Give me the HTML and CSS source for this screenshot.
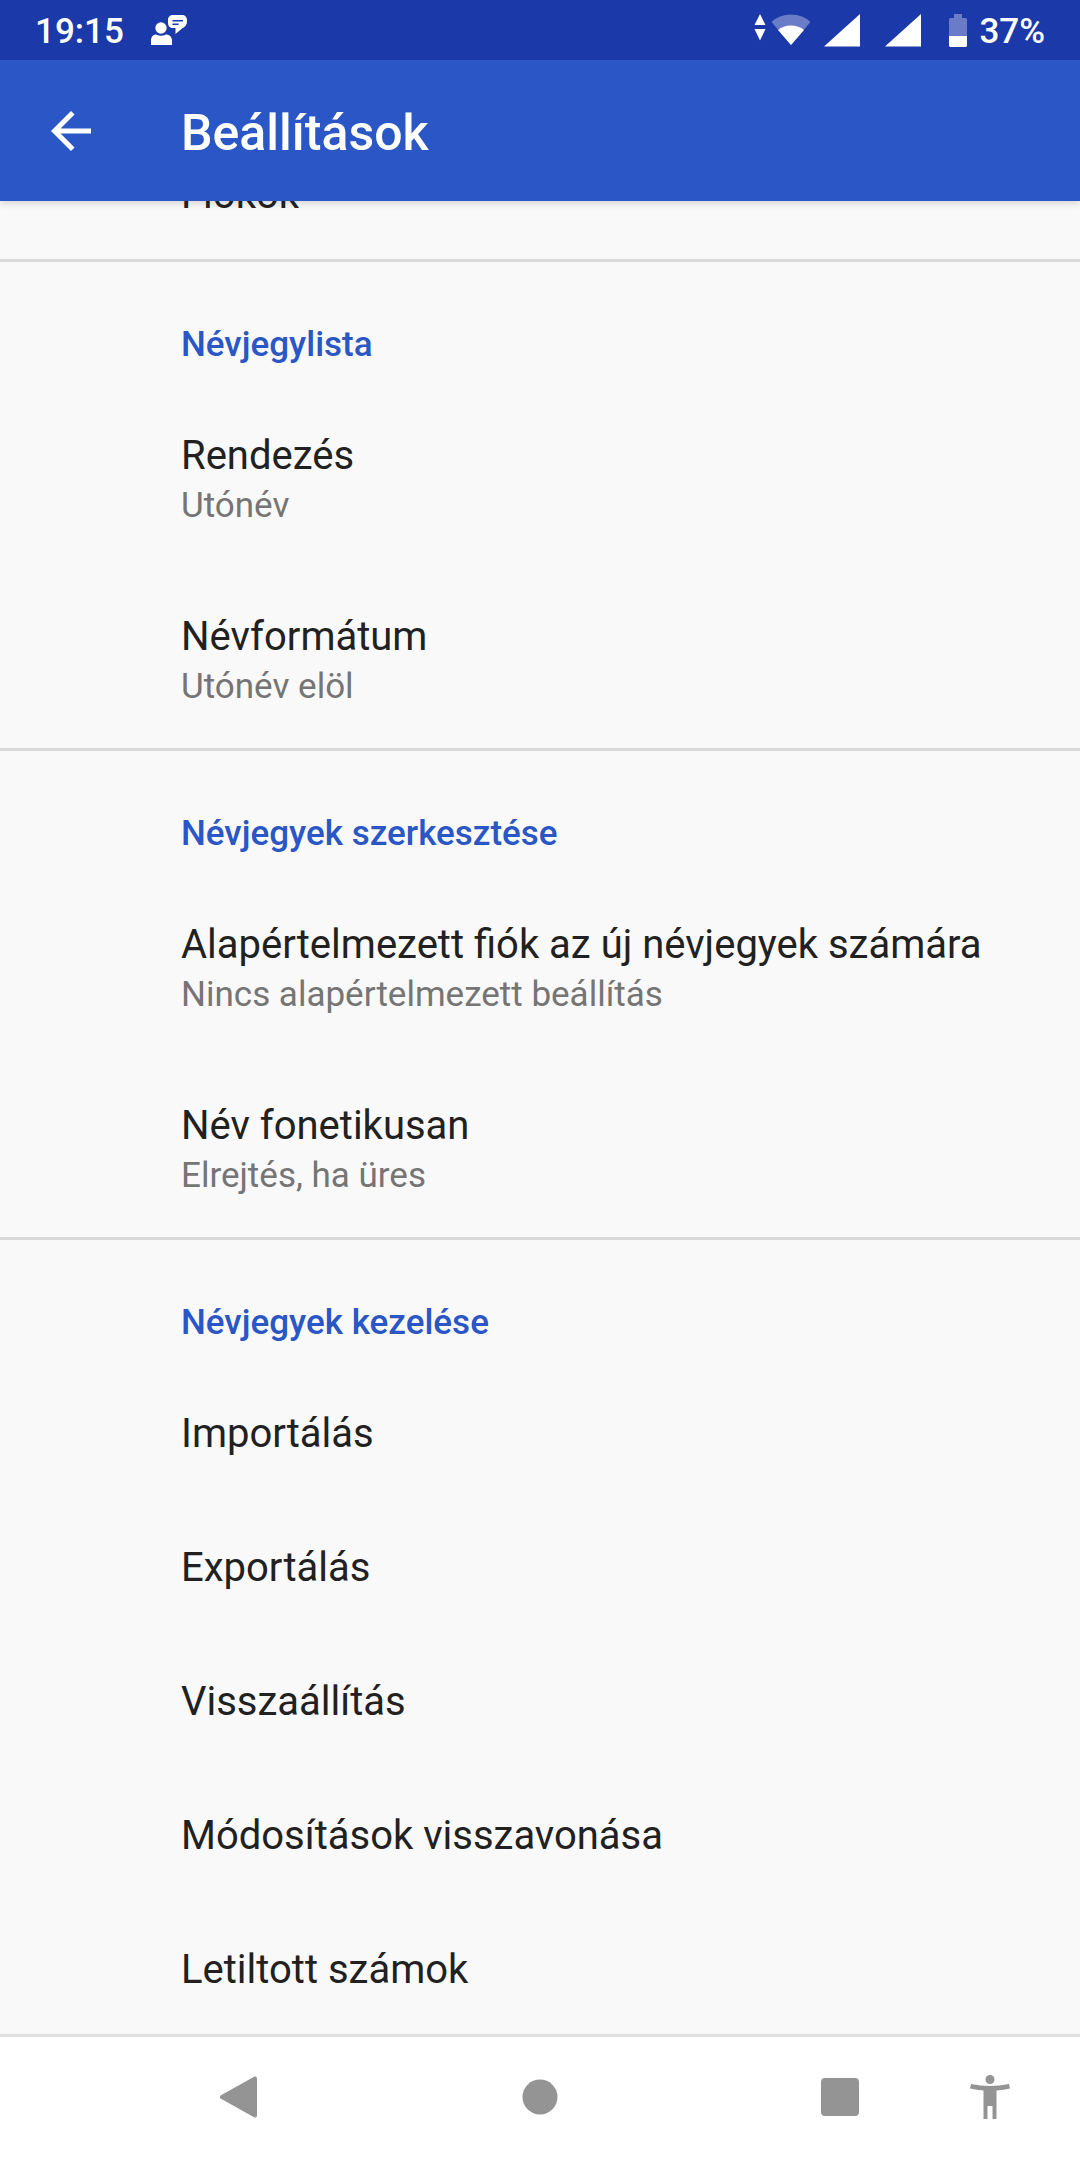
FILE: index.html
```html
<!DOCTYPE html>
<html lang="hu">
<head>
<meta charset="utf-8">
<meta name="viewport" content="width=device-width, initial-scale=1">
<title>Beállítások</title>
<link rel="stylesheet" href="styles.css">
</head>
<body>
<div class="screen">
  <div class="status-bar">
    <div class="status-left">
      <span class="clock">19:15</span>
      <svg class="icon-person" width="38" height="32" viewBox="0 0 38 32" aria-hidden="true">
        <circle cx="11" cy="14" r="5.7" fill="#fff"/>
        <path d="M1 31v-4.500c0-4 2.700-6 5-6q5 2.600 10 0c2.800 0 6 2 6 6V31z" fill="#fff"/>
        <path d="M23 1h9c3 0 5 2 5 5.200v1.300c0 3.500-2 5.500-5 7L25.500 20v-6H23c-3 0-5-2-5-5V6c0-3 2-5 5-5z" fill="#fff"/>
        <path d="M22.500 6.800h10.500M22.500 10.200h6" stroke="#1b39a8" stroke-width="1.400"/>
      </svg>
    </div>
    <div class="status-right">
      <svg class="icon-data" width="12" height="34" viewBox="0 0 12 34" aria-hidden="true">
        <path d="M6 0l5.500 11H.5zM.5 15h11L6 26.500z" fill="#fff"/>
      </svg>
      <svg class="icon-wifi" width="40" height="34" viewBox="0 0 40 34" aria-hidden="true">
        <path d="M.5 8Q8 .5 20 .5t19.500 7.500L20 31z" fill="#6a7bc7"/>
        <path d="M7 16Q12 11.500 20 11.500t13 4.500L20 31z" fill="#fff"/>
      </svg>
      <svg class="icon-signal" width="36" height="34" viewBox="0 0 36 34" aria-hidden="true"><path d="M36 0v32.500H0z" fill="#fff"/></svg>
      <svg class="icon-signal" width="36" height="34" viewBox="0 0 36 34" aria-hidden="true"><path d="M36 0v32.500H0z" fill="#fff"/></svg>
      <svg class="icon-battery" width="18" height="34" viewBox="0 0 18 34" aria-hidden="true">
        <path d="M5 0h8v4h4l1 1v17H0V5l1-1h4z" fill="#6a7bc7"/>
        <path d="M0 22h18v10l-1 1H1l-1-1z" fill="#fff"/>
      </svg>
      <span>37%</span>
    </div>
  </div>

  <header class="app-bar">
    <button class="back" type="button" aria-label="Vissza">
      <svg width="60" height="60" viewBox="0 0 24 24" aria-hidden="true"><path d="M20 11H7.830l5.590-5.590L12 4l-8 8 8 8 1.410-1.410L7.830 13H20v-2z" fill="#fff"/></svg>
    </button>
    <h1>Beállítások</h1>
  </header>

  <main class="content">
    <div class="list">
      <section>
        <button class="row" type="button"><span class="label">Fiókok</span></button>
      </section>
      <section>
        <h2>Névjegylista</h2>
        <button class="row" type="button"><span class="label">Rendezés</span><span class="summary">Utónév</span></button>
        <button class="row" type="button"><span class="label">Névformátum</span><span class="summary">Utónév elöl</span></button>
      </section>
      <section>
        <h2>Névjegyek szerkesztése</h2>
        <button class="row" type="button"><span class="label">Alapértelmezett fiók az új névjegyek számára</span><span class="summary">Nincs alapértelmezett beállítás</span></button>
        <button class="row" type="button"><span class="label">Név fonetikusan</span><span class="summary">Elrejtés, ha üres</span></button>
      </section>
      <section>
        <h2>Névjegyek kezelése</h2>
        <button class="row" type="button"><span class="label">Importálás</span></button>
        <button class="row" type="button"><span class="label">Exportálás</span></button>
        <button class="row" type="button"><span class="label">Visszaállítás</span></button>
        <button class="row" type="button"><span class="label">Módosítások visszavonása</span></button>
        <button class="row" type="button"><span class="label">Letiltott számok</span></button>
      </section>
    </div>
  </main>

  <nav class="nav-bar">
    <button class="nav-back" type="button" aria-label="Vissza">
      <svg width="42" height="42" viewBox="0 0 42 42"><path d="M3 21L36 2.500V39.500z" fill="#949494" stroke="#949494" stroke-width="4" stroke-linejoin="round"/></svg>
    </button>
    <button class="nav-home" type="button" aria-label="Kezdőképernyő">
      <svg width="36" height="36" viewBox="0 0 36 36"><circle cx="18" cy="18" r="17.500" fill="#949494"/></svg>
    </button>
    <button class="nav-recent" type="button" aria-label="Áttekintés">
      <svg width="40" height="40" viewBox="0 0 40 40"><rect x="1" y="1" width="38" height="38" rx="4" fill="#949494"/></svg>
    </button>
    <button class="nav-access" type="button" aria-label="Kisegítő lehetőségek">
      <svg width="40" height="46" viewBox="0 0 40 46"><circle cx="20" cy="5.500" r="4.500" fill="#949494"/><path d="M1 10q19 4 38 0l1 4.500q-6 1.500-13.500 2V45h-4V32h-5v13h-4V16.500Q6 16 0 14.500z" fill="#949494"/></svg>
    </button>
  </nav>
</div>
</body>
</html>
```
FILE: styles.css
```css
* {
  box-sizing: border-box;
}

body {
  margin: 0;
  background: #f9f9f9;
  color: #212121;
  font-family: Roboto, "Noto Sans", sans-serif;
}

button {
  margin: 0;
  padding: 0;
  border: 0;
  background: none;
  color: inherit;
  font: inherit;
  text-align: left;
  cursor: pointer;
}

svg {
  display: block;
  flex: none;
}

.screen {
  display: flex;
  flex-direction: column;
  min-height: 100vh;
}

.status-bar {
  display: flex;
  justify-content: space-between;
  align-items: center;
  height: 60px;
  padding: 2px 35px 0;
  background: #1b39a8;
  color: #fff;
  font-size: 35px;
  font-weight: 500;
  line-height: 40px;
  position: relative;
  z-index: 2;
}

.status-left,
.status-right {
  display: flex;
  align-items: center;
}

.status-bar span {
  padding-top: 2px;
}

.status-left {
  gap: 26px;
}

.icon-person {
  margin-bottom: 2px;
}

.icon-data {
  margin-right: 5px;
}

.icon-wifi {
  margin-right: 13px;
}

.icon-signal {
  margin-right: 25px;
}

.icon-battery {
  margin-left: 3px;
  margin-right: 12px;
}

.app-bar {
  display: flex;
  align-items: center;
  height: 141px;
  background: #2a56c6;
  color: #fff;
  box-shadow: 0 2px 8px rgba(0, 0, 0, 0.16);
  position: relative;
  z-index: 1;
}

.back {
  width: 181px;
  padding-left: 41px;
}

h1 {
  margin: 0;
  padding-top: 4px;
  font-size: 50px;
  font-weight: 500;
  line-height: 60px;
}

.content {
  flex: 1;
  overflow: hidden;
}

/* The list is scrolled so that its first row is partly under the app bar. */
.list {
  margin-top: -76px;
}

section + section {
  border-top: 3px solid #dadada;
}

h2 {
  margin: 0;
  padding: 62px 40px 20px 181px;
  color: #2a56c6;
  font-size: 35px;
  font-weight: 500;
  line-height: 42px;
}

.row {
  display: block;
  width: 100%;
  padding: 44px 40px 38px 181px;
}

.label,
.summary {
  display: block;
}

.label {
  font-size: 40px;
  line-height: 52px;
}

.summary {
  padding-top: 1px;
  color: #757575;
  font-size: 35px;
  line-height: 46px;
}

.nav-bar {
  display: grid;
  grid-template-columns: 5fr 6fr 4fr 6fr 4fr 6fr 4fr 1fr;
  height: 126px;
  padding-bottom: 3px;
  border-top: 3px solid #e0e0e0;
  background: #fff;
}

.nav-bar button {
  display: flex;
  align-items: center;
  justify-content: center;
}

.nav-back {
  grid-column: 2;
}

.nav-home {
  grid-column: 4;
}

.nav-recent {
  grid-column: 6;
}

.nav-access {
  grid-column: 7;
}
```
